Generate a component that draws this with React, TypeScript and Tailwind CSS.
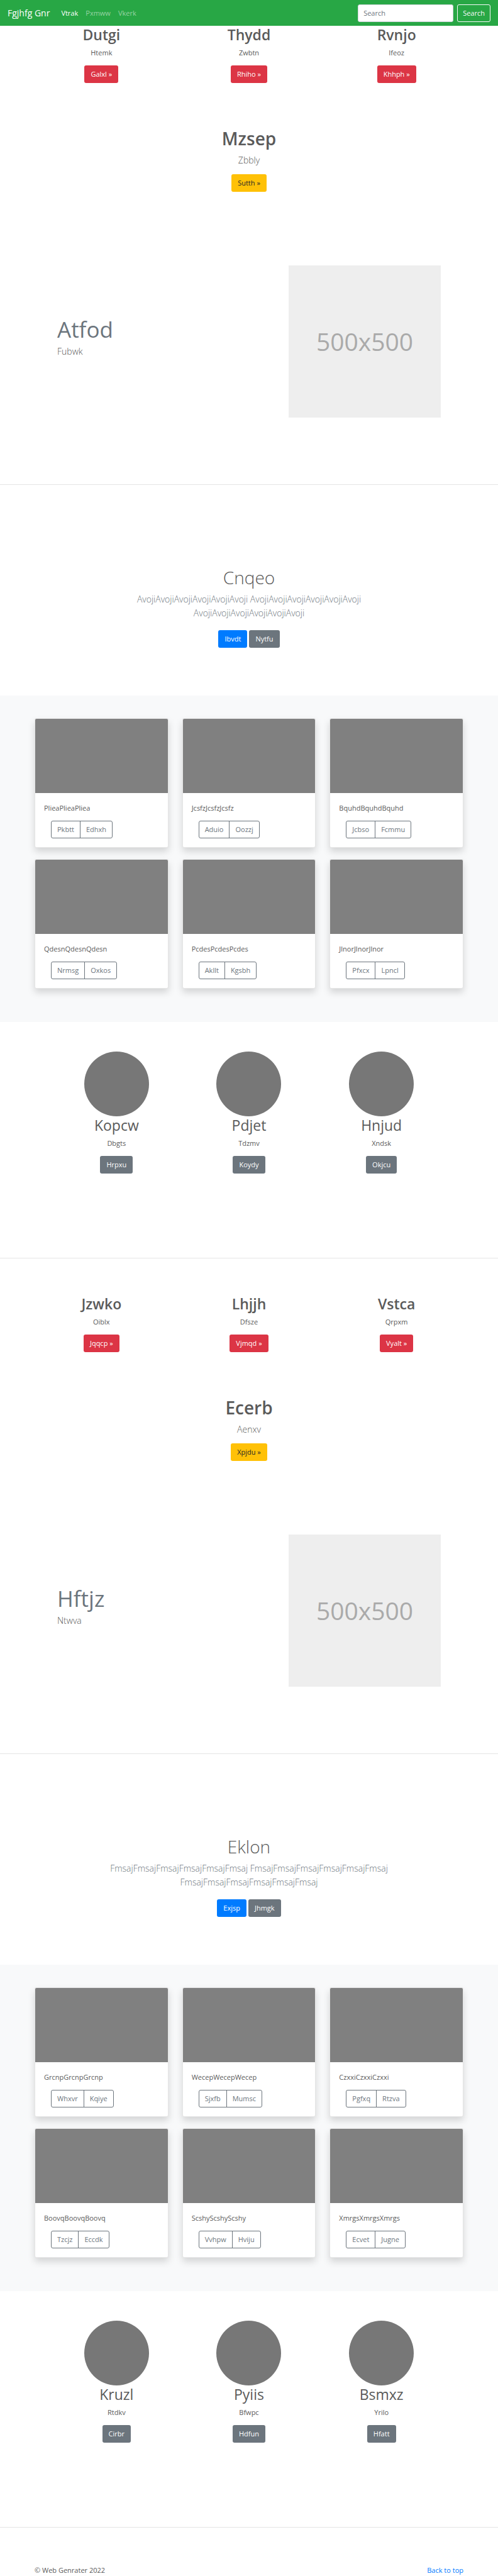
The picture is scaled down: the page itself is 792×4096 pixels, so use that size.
import React from "react";

type Item = { title: string; text: string; action: string };
type CardItem = { text: string; left: string; right: string };
type BlockData = {
  columns: Item[];
  hero: Item;
  feature: { title: string; text: string };
  intro: { title: string; text: string; primary: string; secondary: string };
  cards: CardItem[];
  people: Item[];
};

const blocks: BlockData[] = [
  {
    columns: [
      { title: "Dutgi", text: "Htemk", action: "Galxl »" },
      { title: "Thydd", text: "Zwbtn", action: "Rhiho »" },
      { title: "Rvnjo", text: "Ifeoz", action: "Khhph »" },
    ],
    hero: { title: "Mzsep", text: "Zbbly", action: "Sutth »" },
    feature: { title: "Atfod", text: "Fubwk" },
    intro: {
      title: "Cnqeo",
      text: "AvojiAvojiAvojiAvojiAvojiAvoji AvojiAvojiAvojiAvojiAvojiAvoji AvojiAvojiAvojiAvojiAvojiAvoji",
      primary: "Ibvdt",
      secondary: "Nytfu",
    },
    cards: [
      { text: "PlieaPlieaPliea", left: "Pkbtt", right: "Edhxh" },
      { text: "JcsfzJcsfzJcsfz", left: "Aduio", right: "Oozzj" },
      { text: "BquhdBquhdBquhd", left: "Jcbso", right: "Fcmmu" },
      { text: "QdesnQdesnQdesn", left: "Nrmsg", right: "Oxkos" },
      { text: "PcdesPcdesPcdes", left: "Akllt", right: "Kgsbh" },
      { text: "JlnorJlnorJlnor", left: "Pfxcx", right: "Lpncl" },
    ],
    people: [
      { title: "Kopcw", text: "Dbgts", action: "Hrpxu" },
      { title: "Pdjet", text: "Tdzmv", action: "Koydy" },
      { title: "Hnjud", text: "Xndsk", action: "Okjcu" },
    ],
  },
  {
    columns: [
      { title: "Jzwko", text: "Oiblx", action: "Jqqcp »" },
      { title: "Lhjjh", text: "Dfsze", action: "Vjmqd »" },
      { title: "Vstca", text: "Qrpxm", action: "Vyalt »" },
    ],
    hero: { title: "Ecerb", text: "Aenxv", action: "Xpjdu »" },
    feature: { title: "Hftjz", text: "Ntwva" },
    intro: {
      title: "Eklon",
      text: "FmsajFmsajFmsajFmsajFmsajFmsaj FmsajFmsajFmsajFmsajFmsajFmsaj FmsajFmsajFmsajFmsajFmsajFmsaj",
      primary: "Exjsp",
      secondary: "Jhmgk",
    },
    cards: [
      { text: "GrcnpGrcnpGrcnp", left: "Whxvr", right: "Kqiye" },
      { text: "WecepWecepWecep", left: "Sjxfb", right: "Mumsc" },
      { text: "CzxxiCzxxiCzxxi", left: "Pgfxq", right: "Rtzva" },
      { text: "BoovqBoovqBoovq", left: "Tzcjz", right: "Eccdk" },
      { text: "ScshyScshyScshy", left: "Vvhpw", right: "Hviju" },
      { text: "XmrgsXmrgsXmrgs", left: "Ecvet", right: "Jugne" },
    ],
    people: [
      { title: "Kruzl", text: "Rtdkv", action: "Cirbr" },
      { title: "Pyiis", text: "Bfwpc", action: "Hdfun" },
      { title: "Bsmxz", text: "Yrilo", action: "Hfatt" },
    ],
  },
];

const tones = {
  danger: "bg-[#dc3545] text-white",
  warning: "bg-[#ffc107] text-[#212529]",
  primary: "bg-[#007bff] text-white",
  secondary: "bg-[#6c757d] text-white",
};

function ButtonLink({ tone, children }: { tone: keyof typeof tones; children: string }) {
  return (
    <a href="#" className={`inline-flex h-7 items-center rounded-[3px] px-2.5 align-top ${tones[tone]}`}>
      {children}
    </a>
  );
}

function Navbar() {
  return (
    <nav className="flex h-[41px] items-center bg-[#28a745] px-3">
      <a href="#" className="mr-3 text-[14px] text-white">Fgjhfg Gnr</a>
      <div className="flex flex-1">
        <a href="#" className="px-1.5 text-white">Vtrak</a>
        <a href="#" className="px-1.5 text-white/50">Pxmww</a>
        <a href="#" className="px-1.5 text-white/50">Vkerk</a>
      </div>
      <form className="flex gap-1.5" onSubmit={(e) => e.preventDefault()}>
        <input
          type="search"
          aria-label="Search"
          placeholder="Search"
          className="h-7 w-[152px] rounded-[3px] border border-[#ced4da] bg-white px-2 placeholder:text-[#6c757d]"
        />
        <button type="submit" className="h-7 rounded-[3px] border border-[#f8f9fa] px-2 text-[#f8f9fa]">
          Search
        </button>
      </form>
    </nav>
  );
}

function Columns({ items }: { items: Item[] }) {
  return (
    <section className="mx-auto grid w-full max-w-[704px] grid-cols-3 text-center">
      {items.map((item) => (
        <div key={item.title}>
          <h2 className="mb-1.5 text-[23px] leading-7 font-semibold">{item.title}</h2>
          <p className="mb-[11px]">{item.text}</p>
          <ButtonLink tone="danger">{item.action}</ButtonLink>
        </div>
      ))}
    </section>
  );
}

function Hero({ item }: { item: Item }) {
  return (
    <section className="mt-[70px] text-center">
      <h1 className="mb-1.5 text-[28px] leading-9 font-semibold">{item.title}</h1>
      <p className="mb-[11px] text-[14px] leading-[22px] font-light">{item.text}</p>
      <ButtonLink tone="warning">{item.action}</ButtonLink>
    </section>
  );
}

function Feature({ title, text }: { title: string; text: string }) {
  return (
    <section className="mx-auto mt-[117px] mb-[106px] flex w-full max-w-[610px] justify-between">
      <div className="pt-[83px]">
        <h2 className="mb-1.5 text-[35px] leading-[37px] text-[#6c757d]">{title}</h2>
        <p className="text-[14px] leading-[22px] font-light">{text}</p>
      </div>
      <div className="flex size-[242px] items-center justify-center bg-[#eeeeee] text-[39px] text-[#aaaaaa]">
        500x500
      </div>
    </section>
  );
}

function Intro({ intro }: { intro: BlockData["intro"] }) {
  return (
    <section className="mx-auto max-w-[470px] pt-[129px] pb-[76px] text-center">
      <h1 className="mb-1.5 text-[28px] leading-9 font-light">{intro.title}</h1>
      <p className="mb-4 text-[14px] leading-[22px] font-light text-[#6c757d]">{intro.text}</p>
      <div className="flex justify-center gap-[3px]">
        <ButtonLink tone="primary">{intro.primary}</ButtonLink>
        <ButtonLink tone="secondary">{intro.secondary}</ButtonLink>
      </div>
    </section>
  );
}

function Card({ card }: { card: CardItem }) {
  return (
    <article className="overflow-hidden rounded-[3px] border border-black/10 bg-white shadow-[0_6px_12px_rgba(0,0,0,0.15)]">
      <div className="h-[118px] bg-[#808080]" />
      <div className="px-3.5 pt-[15px] pb-3.5">
        <p className="mb-[11px]">{card.text}</p>
        <div className="ml-[11px] inline-flex h-7 divide-x divide-[#6c757d] rounded-[3px] border border-[#6c757d] align-top text-[#6c757d]">
          <button type="button" className="px-[9px]">{card.left}</button>
          <button type="button" className="px-[9px]">{card.right}</button>
        </div>
      </div>
    </article>
  );
}

function Album({ cards }: { cards: CardItem[] }) {
  return (
    <section className="bg-[#f8f9fa] pt-9 pb-[53px]">
      <div className="mx-auto grid w-full max-w-[682px] grid-cols-3 gap-x-[22px] gap-y-[18px]">
        {cards.map((card) => (
          <Card key={card.text} card={card} />
        ))}
      </div>
    </section>
  );
}

function People({ people }: { people: Item[] }) {
  return (
    <section className="mx-auto grid w-full max-w-[632px] grid-cols-3 pt-[47px] pb-[134px] text-center">
      {people.map((person) => (
        <div key={person.title}>
          <div className="mx-auto size-[103px] rounded-full bg-[#777777]" />
          <h2 className="mb-1.5 text-[23px] leading-7">{person.title}</h2>
          <p className="mb-[11px]">{person.text}</p>
          <ButtonLink tone="secondary">{person.action}</ButtonLink>
        </div>
      ))}
    </section>
  );
}

export default function App() {
  return (
    <div className="bg-white font-['Open_Sans','Noto_Sans',sans-serif] text-[11px] leading-[18px] text-[#5a5a5a]">
      <Navbar />
      <main>
        {blocks.map((block, index) => (
          <div key={block.hero.title} className={index > 0 ? "pt-[58px]" : ""}>
            <Columns items={block.columns} />
            <Hero item={block.hero} />
            <Feature title={block.feature.title} text={block.feature.text} />
            <hr className="border-[#e5e5e5]" />
            <Intro intro={block.intro} />
            <Album cards={block.cards} />
            <People people={block.people} />
            <hr className="border-[#e5e5e5]" />
          </div>
        ))}
      </main>
      <footer className="mx-auto flex w-full max-w-[682px] justify-between pt-[59px]">
        <p>© Web Genrater 2022</p>
        <a href="#" className="text-[#007bff]">Back to top</a>
      </footer>
    </div>
  );
}
